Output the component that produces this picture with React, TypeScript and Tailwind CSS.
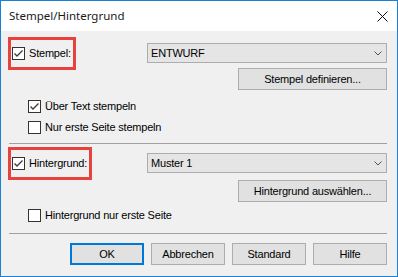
import React from "react"

function CheckBox({ checked }: { checked?: boolean }) {
  return (
    <span className="w-[13px] h-[13px] shrink-0 border border-[#333333] bg-white flex items-center justify-center">
      {checked && (
        <svg width="11" height="11" viewBox="0 0 11 11">
          <path d="M1.5 5.5 L4 8 L9.5 2.5" fill="none" stroke="#3a3a3a" strokeWidth="1.3" />
        </svg>
      )}
    </span>
  )
}

function CheckRow({ label, checked, marked }: { label: string; checked?: boolean; marked?: boolean }) {
  return (
    <label className="relative flex items-center gap-[4px] h-[13px]">
      <CheckBox checked={checked} />
      <span className="leading-none">{label}</span>
      {marked && (
        <span className="absolute left-[-4px] right-[-5px] top-[-10px] bottom-[-10px] border-[3px] border-[#e8423f] pointer-events-none" />
      )}
    </label>
  )
}

function Combo({ value }: { value: string }) {
  return (
    <div className="w-[240px] h-[20px] bg-[#e5e5e5] border border-[#adadad] flex items-center justify-between pl-[3px] pr-[4px]">
      <span>{value}</span>
      <svg width="8" height="5" viewBox="0 0 8 5">
        <path d="M0.5 0.5 L4 4 L7.5 0.5" fill="none" stroke="#555555" strokeWidth="1" />
      </svg>
    </div>
  )
}

function Button({ children, wide, primary }: { children: React.ReactNode; wide?: boolean; primary?: boolean }) {
  return (
    <button
      className={`${wide ? "w-[149px] h-[22px]" : "w-[74px] h-[22px]"} bg-[#e1e1e1] flex items-center justify-center ${
        primary ? "border-2 border-[#0078d7]" : "border border-[#adadad]"
      }`}
    >
      {children}
    </button>
  )
}

export default function App() {
  return (
    <div className="w-[398px] h-[277px] border border-[#1a80d6] bg-[#f0f0f0] flex flex-col font-['Liberation_Sans',sans-serif] text-[11px] tracking-[-0.2px] text-black">
      <div className="h-[30px] bg-white flex items-center justify-between pl-[8px] pr-[9px]">
        <span className="font-['Noto_Sans',sans-serif] text-[11.5px] tracking-normal text-[#1a1a1a]">Stempel/Hintergrund</span>
        <svg width="11" height="11" viewBox="0 0 11 11">
          <path d="M0.5 0.5 L10.5 10.5 M10.5 0.5 L0.5 10.5" stroke="#111111" strokeWidth="1" />
        </svg>
      </div>

      <div className="flex-1 flex flex-col pl-[8px] pr-[10px] pt-[12px]">
        <div className="flex items-center justify-between h-[20px]">
          <div className="ml-[3px]">
            <CheckRow label="Stempel:" checked marked />
          </div>
          <Combo value="ENTWURF" />
        </div>
        <div className="flex justify-end mt-[5px]">
          <Button wide>Stempel definieren...</Button>
        </div>
        <div className="ml-[19px] mt-[10px] flex flex-col gap-[8px]">
          <CheckRow label="Über Text stempeln" checked />
          <CheckRow label="Nur erste Seite stempeln" />
        </div>

        <div className="mt-[9px] h-px bg-[#a0a0a0]" />

        <div className="flex items-center justify-between h-[20px] mt-[9px]">
          <div className="ml-[3px]">
            <CheckRow label="Hintergrund:" checked marked />
          </div>
          <Combo value="Muster 1" />
        </div>
        <div className="flex justify-end mt-[7px]">
          <Button wide>Hintergrund auswählen...</Button>
        </div>
        <div className="ml-[19px] mt-[7px]">
          <CheckRow label="Hintergrund nur erste Seite" />
        </div>

        <div className="mt-[11px] h-px bg-[#a0a0a0]" />

        <div className="flex justify-end gap-[7px] mt-[9px]">
          <Button primary>OK</Button>
          <Button>Abbrechen</Button>
          <Button>Standard</Button>
          <Button>Hilfe</Button>
        </div>
      </div>
    </div>
  )
}
